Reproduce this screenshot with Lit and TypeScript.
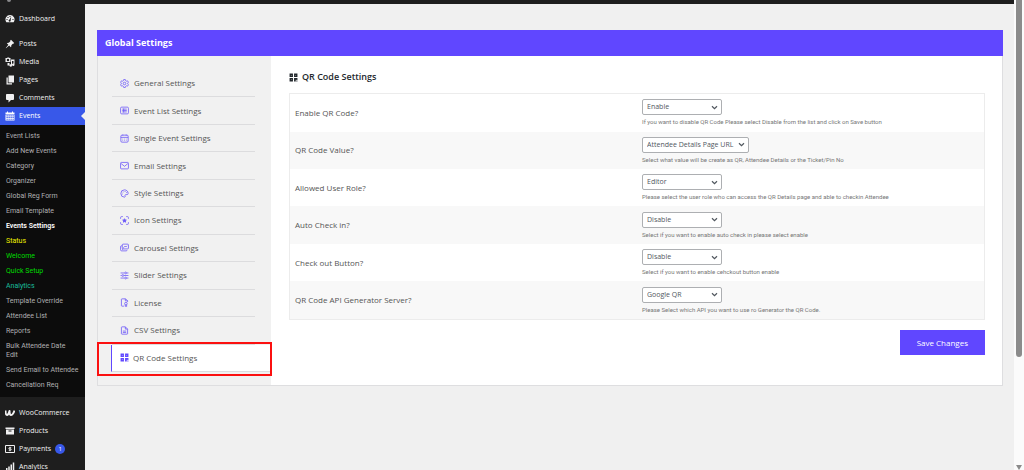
import { LitElement, html, css, svg, nothing } from "lit";
import { customElement, property } from "lit/decorators.js";
import { classMap } from "lit/directives/class-map.js";

const menuIcons: Record<string, unknown> = {
  gauge: svg`<path fill="currentColor" fill-rule="evenodd" d="M10 2a9 9 0 0 1 7.6 13.8c-.3.5-.6.7-1 .7H3.4c-.4 0-.7-.2-1-.7A9 9 0 0 1 10 2zM9 4v2h2V4zM5 6v2h2V6zM3 10v2h2v-2zm12 0v2h2v-2zm-2.500-4.500-3.800 6a2 2 0 1 0 2.500 1z"/>`,
  pin: svg`<path fill="currentColor" d="M10.4 3.200 12 1.600 18.400 8l-1.600 1.600-1.200-.3-3 3c.5 1.500.2 3-.9 4.100l-3.400-3.400L2 18.400 1.600 18l5.200-6.300-3.200-3.300c1.100-1.100 2.600-1.400 4.100-.9l3-3z"/>`,
  media: svg`<path fill="currentColor" fill-rule="evenodd" d="M1 2h3l1-1h3l1 1h2v8H1zm5 1.500a2.500 2.500 0 1 0 0 5 2.500 2.500 0 0 0 0-5zM12 5h7v10.500a2.500 2.500 0 1 1-2-2.450V8h-3v9a2.500 2.500 0 1 1-2-2.450zM5 12h4v5H5z"/>`,
  pages: svg`<path fill="currentColor" d="M7 1h11v14H7zM3 5h2.500v11.500H14V19H3z"/>`,
  comment: svg`<path fill="currentColor" d="M4 2h12a2 2 0 0 1 2 2v8a2 2 0 0 1-2 2h-4l-5 5v-5H4a2 2 0 0 1-2-2V4c0-1.100.9-2 2-2z"/>`,
  calendar: svg`<path fill="currentColor" fill-rule="evenodd" d="M4 1h2v2h8V1h2v2h3v3H1V3h3zM1 7h18v12H1zm2 1.500V11h2.500V8.500zm4 0V11h2.500V8.500zm4 0V11h2.500V8.500zm4 0V11h2.500V8.500zM3 12v2.200h2.500V12zm4 0v2.200h2.500V12zm4 0v2.200h2.500V12zm4 0v2.200h2.500V12zM3 15.300v2.200h2.500v-2.200zm4 0v2.200h2.500v-2.200zm4 0v2.200h2.500v-2.200zm4 0v2.200h2.500v-2.200z"/>`,
  woo: svg`<path fill="none" stroke="currentColor" stroke-width="4" stroke-linejoin="round" d="M1 5c0 5 1 9 3 9s4-4 5-8c0 5 1 8 3 8 3 0 5-4 7-9"/>`,
  archive: svg`<path fill="currentColor" fill-rule="evenodd" d="M1 3h18v3H1zm1 4h16v10H2zm5 2v2h6V9z"/>`,
  money: svg`<path fill="none" stroke="currentColor" stroke-width="2" d="M1 3h18v14H1z"/><path fill="none" stroke="currentColor" stroke-width="1.800" d="M12.500 7.500H9q-1.500 0-1.500 1.200T9 10h2q1.500 0 1.500 1.200T11 12.500H7.500M10 5.500v9"/>`,
  bars: svg`<path fill="currentColor" d="M2 12h3v7H2zm4.500-3h3v10h-3zM11 5h3v14h-3zm4.500-4h3v18h-3z"/>`,
};

const tabIcons: Record<string, unknown> = {
  gear: svg`<path d="M6.500 1h3l.5 2 1.500.9 2-.6 1.500 2.500L13.600 7.200v1.600l1.400 1.400-1.500 2.500-2-.6L10 13l-.5 2h-3L6 13l-1.500-.9-2 .6L1 10.200l1.400-1.400V7.200L1 5.800l1.500-2.500 2 .6L6 3z"/><circle cx="8" cy="8" r="2.300"/>`,
  list: svg`<rect x="1" y="2" width="14" height="12" rx="2"/><path d="M4 5.500h8M4 8h8M4 10.500h8M6.500 4.500v7"/>`,
  event: svg`<rect x="1.500" y="2" width="13" height="12.500" rx="2"/><path d="M1.500 6h13M4.500 9h1m2 0h1m2 0h1M4.500 11.500h1m2 0h1m2 0h1M5 1v2m6-2v2"/>`,
  mail: svg`<rect x="1" y="2.500" width="14" height="11.500" rx="1.500"/><path d="m2 4.500 6 5 6-5"/>`,
  palette: svg`<path d="M8 1.500a6.500 6.500 0 1 0 0 13c1.500 0 1.500-1.200 1-2.200s0-2.300 1.300-2.300h2.200c1.300 0 2-.8 2-2C14.500 4 11.600 1.500 8 1.500z"/><path stroke-width="1.600" d="M4 8.200v1.400M5.500 4.600V6M9 3.600V5m2.800.8v1.400"/>`,
  focus: svg`<path d="M1 5V3q0-2 2-2h2m6 0h2q2 0 2 2v2m0 6v2q0 2-2 2h-2m-6 0H3q-2 0-2-2v-2"/><path fill="currentColor" d="m8 4.800 1 2.100 2.300.3-1.700 1.600.4 2.300-2-1.100-2 1.100.4-2.300-1.700-1.600L7 6.900z"/>`,
  slides: svg`<rect x="4" y="2" width="11" height="8.500" rx="1.500"/><path d="M4 5H2.500Q1 5 1 6.500V12q0 2 2 2h8q1.500 0 1.500-1.500M6 8.500l3-3 1.500 1.500L12.500 5M4 12l2-2"/>`,
  sliders: svg`<path d="M1 3.500h7m4 0h3M1 8h2m4 0h8M1 12.500h7m4 0h3"/><circle cx="10" cy="3.500" r="1.600"/><circle cx="5" cy="8" r="1.600"/><circle cx="10" cy="12.500" r="1.600"/>`,
  license: svg`<path d="M7 14.500H3.500q-1 0-1-1v-11q0-1 1-1H10L13.500 5v2M9.500 1.500V5h4"/><circle cx="10.500" cy="10" r="2.300"/><path d="M9.300 12v3l1.200-.8 1.300.8v-3"/>`,
  csv: svg`<path d="M3.500 1.500H9.500L13.500 5.500v8q0 1-1 1h-9q-1 0-1-1v-11q0-1 1-1zM9.500 1.500v4h4M5 9h6M5 11.500h6"/>`,
  qr: svg`<path stroke-width="2.400" d="M2.200 2.200h3.600v3.600H2.200zm8 0h3.600v3.600h-3.600zM2.200 10.200h3.600v3.600H2.200z"/><path fill="currentColor" stroke="none" d="M9 9h6v3.500h-1.500V12H12v3H9zM13 13.500h2V15h-2z"/>`,
};

@customElement("tab-icon")
class TabIcon extends LitElement {
  @property() name = "gear";

  static styles = css`
    :host { display: block; width: 9px; height: 9px; }
    .glyph { display: block; width: 100%; height: 100%; }
  `;

  render() {
    return html`<svg class="glyph" viewBox="0 0 16 16" fill="none" stroke="currentColor" stroke-width="1.400" aria-hidden="true">${tabIcons[this.name]}</svg>`;
  }
}

interface MenuEntry { label: string; icon: string; badge?: number; active?: boolean }

const topMenu: MenuEntry[] = [
  { label: "Posts", icon: "pin" },
  { label: "Media", icon: "media" },
  { label: "Pages", icon: "pages" },
  { label: "Comments", icon: "comment" },
  { label: "Events", icon: "calendar", active: true },
];
const subMenu: [string, string?][] = [
  ["Event Lists"], ["Add New Events"], ["Category"], ["Organizer"], ["Global Reg Form"],
  ["Email Template"], ["Events Settings", "current"], ["Status", "yellow"],
  ["Welcome", "green"], ["Quick Setup", "green"], ["Analytics", "teal"],
  ["Template Override"], ["Attendee List"], ["Reports"], ["Bulk Attendee Date\nEdit"],
  ["Send Email to Attendee"], ["Cancellation Req"],
];
const shopMenu: MenuEntry[] = [
  { label: "WooCommerce", icon: "woo" },
  { label: "Products", icon: "archive" },
  { label: "Payments", icon: "money", badge: 1 },
  { label: "Analytics", icon: "bars" },
];

@customElement("admin-menu")
class AdminMenu extends LitElement {
  static styles = css`
    :host { display: block; background: #1e1e1e; color: #f0f0f1; overflow: hidden; }
    .menu { display: flex; flex-direction: column; }
    .tail { width: 4px; height: 2px; margin: 0 0 8px 7px; border-radius: 0 0 2px 2px; background: #8a8a8c; flex: none; }
    .gap { height: 7px; flex: none; }
    .item {
      display: flex; align-items: center; gap: 4px; height: 18px; padding-left: 5px;
      position: relative; flex: none; color: inherit; text-decoration: none;
      font-size: 7px; line-height: 10px;
    }
    .item.active { background: #3858e9; color: #fff; }
    .item.active::after {
      content: ""; position: absolute; right: 0; top: 5px;
      border: 4px solid transparent; border-right-color: #f0f0f0; border-left-width: 0;
    }
    .icon { width: 10px; height: 10px; flex: none; }
    .badge {
      width: 10px; height: 10px; border-radius: 50%; background: #3858e9; color: #fff;
      font-size: 6px; line-height: 10px; text-align: center;
    }
    .sub {
      display: flex; flex-direction: column; background: #0c0c0c; padding: 4px 0;
      font-family: Roboto, "Open Sans", sans-serif;
    }
    .link {
      padding: 3px 0 3px 6px; font-size: 7px; line-height: 9px; color: #b0b0b2;
      text-decoration: none; white-space: pre-line;
    }
    .current { color: #fff; font-weight: 600; }
    .yellow { color: #f0f000; }
    .green { color: #00dc00; }
    .teal { color: #1abc9c; }
  `;

  private entry(e: MenuEntry) {
    return html`<a href="#" class=${classMap({ item: true, active: !!e.active })}>
      <svg class="icon" viewBox="0 0 20 20" aria-hidden="true">${menuIcons[e.icon]}</svg>
      <span>${e.label}</span>
      ${e.badge ? html`<span class="badge">${e.badge}</span>` : nothing}
    </a>`;
  }

  render() {
    return html`<nav class="menu">
      <div class="tail"></div>
      ${this.entry({ label: "Dashboard", icon: "gauge" })}
      <div class="gap"></div>
      ${topMenu.map((e) => this.entry(e))}
      <div class="sub">
        ${subMenu.map(([label, tone]) => html`<a href="#" class="link ${tone ?? ""}">${label}</a>`)}
      </div>
      <div class="gap"></div>
      ${shopMenu.map((e) => this.entry(e))}
    </nav>`;
  }
}

const tabs: [string, string][] = [
  ["General Settings", "gear"], ["Event List Settings", "list"], ["Single Event Settings", "event"],
  ["Email Settings", "mail"], ["Style Settings", "palette"], ["Icon Settings", "focus"],
  ["Carousel Settings", "slides"], ["Slider Settings", "sliders"], ["License", "license"],
  ["CSV Settings", "csv"], ["QR Code Settings", "qr"],
];

const fields: { label: string; value: string; hint: string }[] = [
  { label: "Enable QR Code?", value: "Enable", hint: "If you want to disable QR Code Please select Disable from the list and click on Save button" },
  { label: "QR Code Value?", value: "Attendee Details Page URL", hint: "Select what value will be create as QR, Attendee Details or the Ticket/Pin No" },
  { label: "Allowed User Role?", value: "Editor", hint: "Please select the user role who can access the QR Details page and able to checkin Attendee" },
  { label: "Auto Check in?", value: "Disable", hint: "Select if you want to enable auto check in please select enable" },
  { label: "Check out Button?", value: "Disable", hint: "Select if you want to enable cehckout button enable" },
  { label: "QR Code API Generator Server?", value: "Google QR", hint: "Please Select which API you want to use ro Generator the QR Code." },
];

@customElement("settings-panel")
class SettingsPanel extends LitElement {
  static styles = css`
    :host { display: block; border: 1px solid #dedee0; border-top: 0; background: #fff; }
    .title {
      margin: 0 -1px; padding: 7px 8px; background: #6047ff; color: #fff;
      font-size: 9px; line-height: 12px; font-weight: 700;
    }
    .body { display: grid; grid-template-columns: 173px 1fr; }
    .tabs {
      display: grid; grid-auto-rows: 1fr; background: #f1f1f1;
      padding: 14px 0 13px 14px;
    }
    .tab {
      display: flex; align-items: center; gap: 5px; margin-right: 16px; padding-left: 8px;
      border-bottom: 1px solid #dcdcde; color: #555; text-decoration: none;
      font-size: 8px; line-height: 12px; white-space: nowrap; position: relative;
    }
    .tab tab-icon { color: #6c58f8; }
    .tab.on {
      margin: 0 0 0 -1px; background: #fff; border-left: 1px solid #6047ff; gap: 4px;
    }
    .tab.on tab-icon { color: #6047ff; }
    .marker {
      position: absolute; inset: -3px -1px -5px -15px; border: 2px solid #fb1010;
      pointer-events: none; z-index: 1;
    }
    .main { padding: 15px 17px 30px 18px; display: flex; flex-direction: column; }
    .heading {
      display: flex; align-items: center; gap: 4px; margin: 0 0 10px; color: #23282d;
      font-size: 9px; line-height: 12px; font-weight: 600;
    }
    .grid {
      width: 100%; height: 227px; border-collapse: collapse; border: 1px solid #ececec;
      table-layout: fixed;
    }
    .row:nth-child(even) { background: #f8f8f8; }
    .name, .value { width: 50%; text-align: left; font-weight: 400; }
    .name { padding: 0 5px; font-size: 8px; line-height: 12px; color: #555; }
    .value { padding: 0 6px; }
    .picker { display: grid; width: fit-content; min-width: 80px; align-items: center; }
    .select {
      grid-area: 1 / 1; appearance: none; height: 16px; padding: 0 14px 0 4px; margin: 0;
      border: 1px solid #adafb2; border-radius: 2px; background: #fff; color: #50575e;
      font-family: inherit; font-size: 7px; line-height: 12px;
    }
    .chevron { grid-area: 1 / 1; justify-self: end; margin-right: 4px; width: 7px; height: 7px; pointer-events: none; }
    .hint {
      margin: 3px 0 0; color: #777; font-family: Roboto, "Open Sans", sans-serif;
      font-size: 6px; line-height: 8px;
    }
    .save {
      align-self: flex-end; margin-top: 10px; padding: 6px 17px; border: 0; background: #6047ff;
      color: #fff; font-family: inherit; font-size: 8px; line-height: 13px;
    }
  `;

  render() {
    return html`
      <div class="title" role="heading" aria-level="1">Global Settings</div>
      <div class="body">
        <nav class="tabs">
          ${tabs.map(([label, icon]) => {
            const on = icon === "qr";
            return html`<a href="#" class=${classMap({ tab: true, on })}>
              <tab-icon name=${icon}></tab-icon><span>${label}</span>
              ${on ? html`<span class="marker"></span>` : nothing}
            </a>`;
          })}
        </nav>
        <form class="main">
          <h2 class="heading"><tab-icon name="qr"></tab-icon>QR Code Settings</h2>
          <table class="grid">
            <tbody>
              ${fields.map((f, i) => html`<tr class="row">
                <th class="name" scope="row"><label for="field-${i}">${f.label}</label></th>
                <td class="value">
                  <div class="picker">
                    <select class="select" id="field-${i}"><option>${f.value}</option></select>
                    <svg class="chevron" viewBox="0 0 14 14" fill="none" stroke="#50575e" stroke-width="2.400" aria-hidden="true"><path d="m2 4.500 5 5 5-5"/></svg>
                  </div>
                  <p class="hint">${f.hint}</p>
                </td>
              </tr>`)}
            </tbody>
          </table>
          <button class="save" type="button">Save Changes</button>
        </form>
      </div>
    `;
  }
}

@customElement("app-root")
class AppRoot extends LitElement {
  static styles = css`
    :host {
      display: grid; grid-template-columns: 85px 1fr 10px; height: 100vh; overflow: hidden;
      background: #f0f0f0; font-family: "Open Sans", "Noto Sans", sans-serif;
    }
    .side { min-height: 0; }
    .content { display: flex; flex-direction: column; min-width: 0; }
    .bar { height: 4px; background: #1e1e1e; flex: none; }
    .panel { margin: 26px 11px 0 12px; }
    .scroll { display: flex; flex-direction: column; justify-content: space-between; align-items: center; background: #fbfbfb; }
    .thumb { width: 6px; height: 76%; background: #8b8b8b; border-radius: 0 0 3px 3px; }
    .arrow { width: 8px; height: 5px; }
  `;

  render() {
    return html`
      <admin-menu class="side"></admin-menu>
      <main class="content">
        <div class="bar"></div>
        <settings-panel class="panel"></settings-panel>
      </main>
      <div class="scroll">
        <div class="thumb"></div>
        <svg class="arrow" viewBox="0 0 8 5" aria-hidden="true"><path fill="#8b8b8b" d="M1 0h6L4 5z"/></svg>
      </div>
    `;
  }
}
